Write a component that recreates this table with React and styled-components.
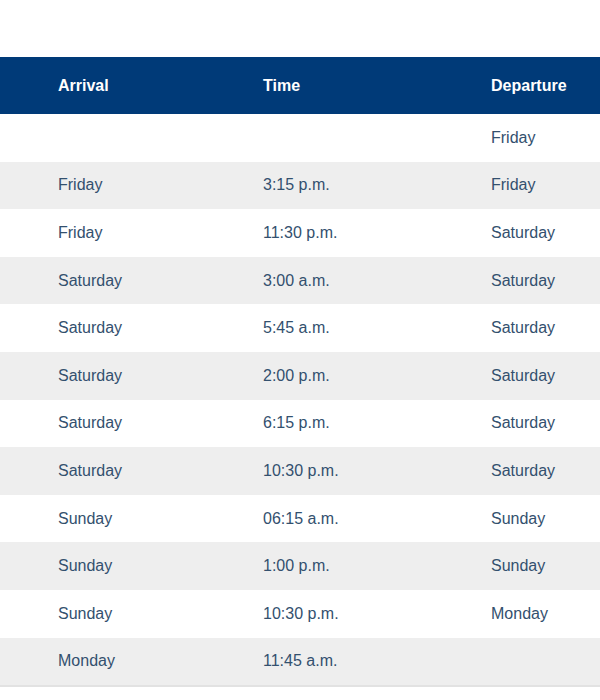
import React from "react";
import styled, { createGlobalStyle } from "styled-components";

const Global = createGlobalStyle`
  html, body { margin: 0; padding: 0; background: #fff; }
  body { font-family: "Liberation Sans", Arial, sans-serif; }
`;

const Page = styled.div`
  padding-top: 57px;
  width: 600px;
  overflow: hidden;
`;

const Table = styled.div`
  display: grid;
  grid-template-columns: 263px 228px 1fr;
  width: 600px;
  border-bottom: 2px solid #e2e2e2;
`;

const HeadCell = styled.div`
  background: #003a78;
  color: #fff;
  font-weight: bold;
  font-size: 16px;
  height: 57px;
  display: flex;
  align-items: center;
  padding-left: ${(p) => (p.$first ? "58px" : "0")};
`;

const Cell = styled.div`
  background: ${(p) => (p.$stripe ? "#eeeeee" : "#ffffff")};
  color: #33506e;
  font-size: 16px;
  height: 47.6px;
  display: flex;
  align-items: center;
  padding-left: ${(p) => (p.$first ? "58px" : "0")};
`;

const rows = [
  ["", "", "Friday"],
  ["Friday", "3:15 p.m.", "Friday"],
  ["Friday", "11:30 p.m.", "Saturday"],
  ["Saturday", "3:00 a.m.", "Saturday"],
  ["Saturday", "5:45 a.m.", "Saturday"],
  ["Saturday", "2:00 p.m.", "Saturday"],
  ["Saturday", "6:15 p.m.", "Saturday"],
  ["Saturday", "10:30 p.m.", "Saturday"],
  ["Sunday", "06:15 a.m.", "Sunday"],
  ["Sunday", "1:00 p.m.", "Sunday"],
  ["Sunday", "10:30 p.m.", "Monday"],
  ["Monday", "11:45 a.m.", ""],
];

export default function App() {
  return (
    <>
      <Global />
      <Page>
        <Table>
          <HeadCell $first>Arrival</HeadCell>
          <HeadCell>Time</HeadCell>
          <HeadCell>Departure</HeadCell>
          {rows.map((r, i) =>
            r.map((c, j) => (
              <Cell key={`${i}-${j}`} $first={j === 0} $stripe={i % 2 === 1}>
                {c}
              </Cell>
            ))
          )}
        </Table>
      </Page>
    </>
  );
}
